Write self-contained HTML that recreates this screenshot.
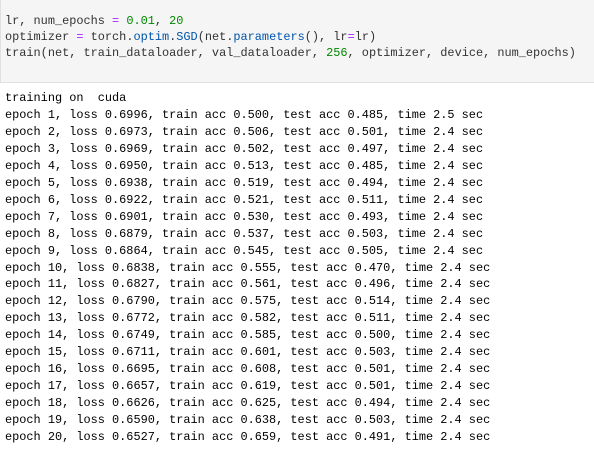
<!DOCTYPE html>
<html><head><style>
body{margin:0;width:594px;height:451px;background:#fff;overflow:hidden;font-family:"Liberation Mono",monospace;font-size:11.9px;color:#333}
.code{position:absolute;left:0;top:0;width:594px;height:83px;background:#f5f5f5;border-left:1px solid #e0e0e0;border-bottom:1px solid #e0e0e0;box-sizing:border-box}
pre{margin:0;font:inherit;white-space:pre}
.c{position:absolute;left:5px;top:13px;line-height:16px}
.o{position:absolute;left:5px;top:90px;color:#000;line-height:16.95px}
.n{color:#008800}.k{color:#aa22ff}.a{color:#0055aa}
</style></head><body>
<div class="code"></div>
<pre class="c">lr, num_epochs <span class="k">=</span> <span class="n">0.01</span>, <span class="n">20</span>
optimizer <span class="k">=</span> torch.<span class="a">optim</span>.<span class="a">SGD</span>(net.<span class="a">parameters</span>(), lr<span class="k">=</span>lr)
train(net, train_dataloader, val_dataloader, <span class="n">256</span>, optimizer, device, num_epochs)</pre>
<pre class="o">training on  cuda
epoch 1, loss 0.6996, train acc 0.500, test acc 0.485, time 2.5 sec
epoch 2, loss 0.6973, train acc 0.506, test acc 0.501, time 2.4 sec
epoch 3, loss 0.6969, train acc 0.502, test acc 0.497, time 2.4 sec
epoch 4, loss 0.6950, train acc 0.513, test acc 0.485, time 2.4 sec
epoch 5, loss 0.6938, train acc 0.519, test acc 0.494, time 2.4 sec
epoch 6, loss 0.6922, train acc 0.521, test acc 0.511, time 2.4 sec
epoch 7, loss 0.6901, train acc 0.530, test acc 0.493, time 2.4 sec
epoch 8, loss 0.6879, train acc 0.537, test acc 0.503, time 2.4 sec
epoch 9, loss 0.6864, train acc 0.545, test acc 0.505, time 2.4 sec
epoch 10, loss 0.6838, train acc 0.555, test acc 0.470, time 2.4 sec
epoch 11, loss 0.6827, train acc 0.561, test acc 0.496, time 2.4 sec
epoch 12, loss 0.6790, train acc 0.575, test acc 0.514, time 2.4 sec
epoch 13, loss 0.6772, train acc 0.582, test acc 0.511, time 2.4 sec
epoch 14, loss 0.6749, train acc 0.585, test acc 0.500, time 2.4 sec
epoch 15, loss 0.6711, train acc 0.601, test acc 0.503, time 2.4 sec
epoch 16, loss 0.6695, train acc 0.608, test acc 0.501, time 2.4 sec
epoch 17, loss 0.6657, train acc 0.619, test acc 0.501, time 2.4 sec
epoch 18, loss 0.6626, train acc 0.625, test acc 0.494, time 2.4 sec
epoch 19, loss 0.6590, train acc 0.638, test acc 0.503, time 2.4 sec
epoch 20, loss 0.6527, train acc 0.659, test acc 0.491, time 2.4 sec</pre>
</body></html>
